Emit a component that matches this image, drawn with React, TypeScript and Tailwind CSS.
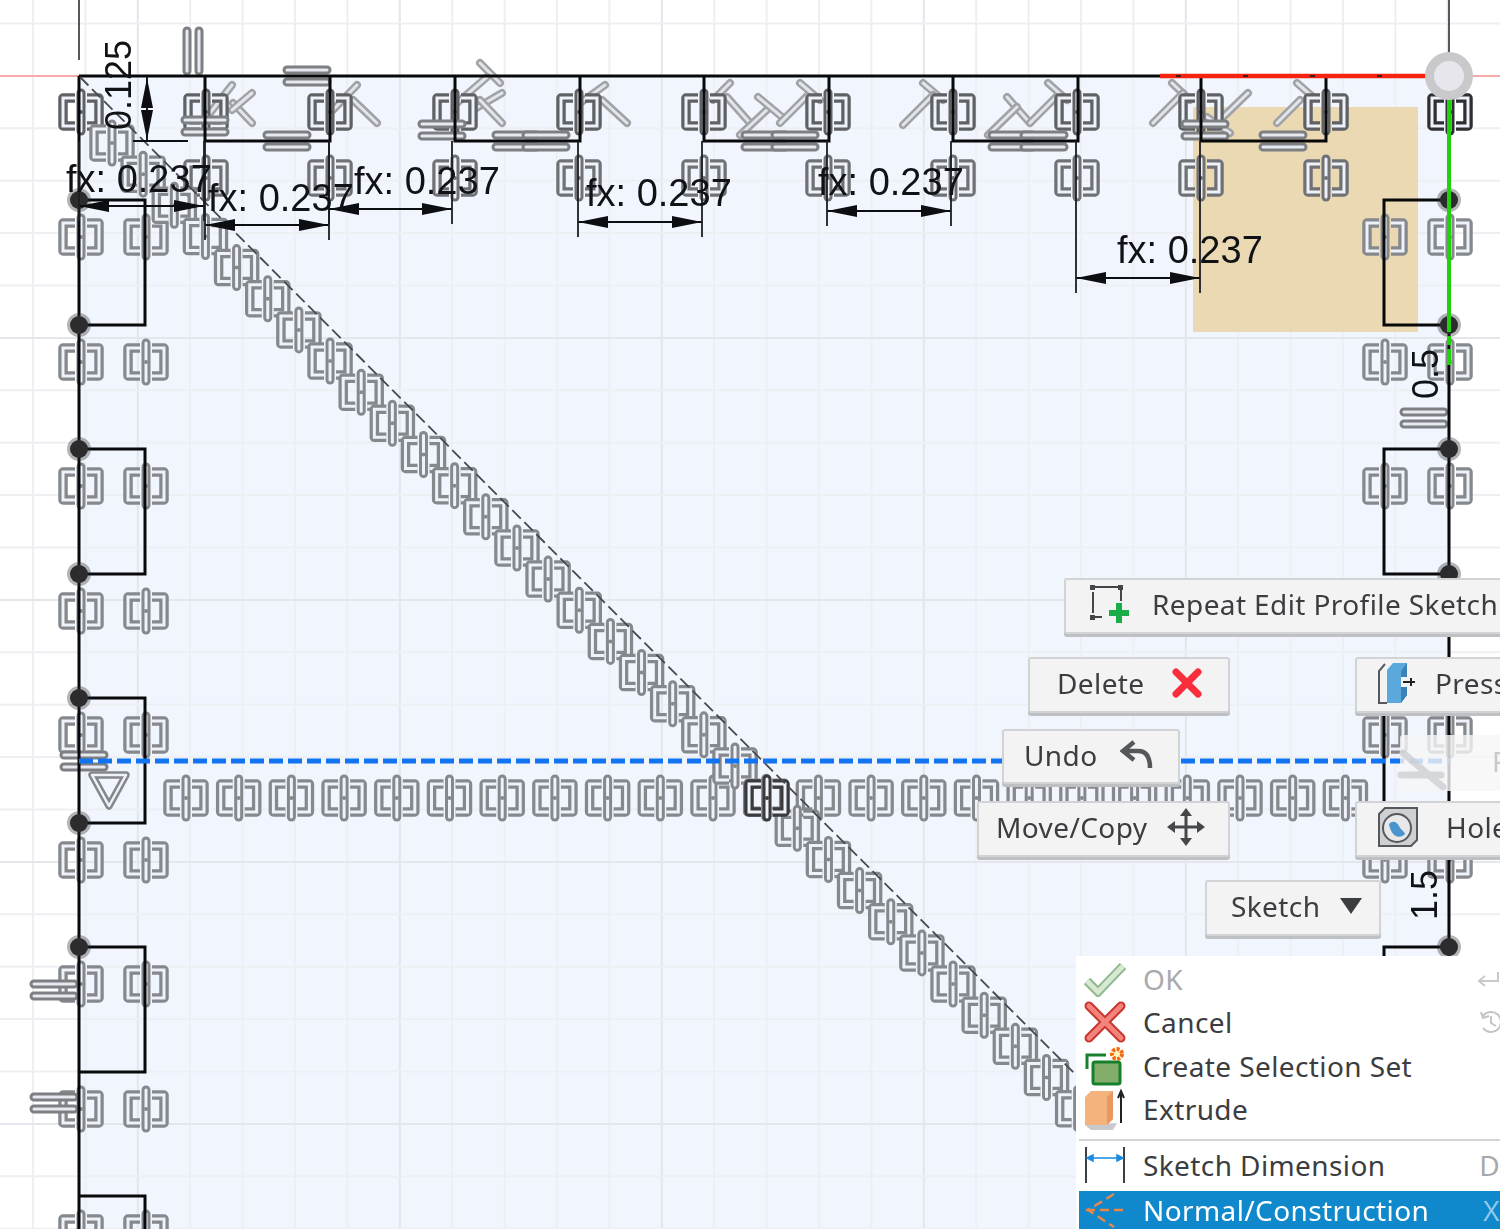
import type { ReactNode } from 'react'

const minorX = Array.from({ length: 28 }, (_, i) => 33 + i * 52.4)
const minorY = Array.from({ length: 24 }, (_, i) => 23.5 + i * 52.4)

const topTabs = [205, 455, 704, 953, 1201]
const sideRows = [200, 449, 698, 947, 1196]
const topGlyphX = [81, 206, 330, 455, 579, 704, 828, 953, 1077, 1201, 1326]
const lowGlyphX = [206, 330, 455, 579, 704, 828, 953, 1077, 1201, 1326]
const sideGlyphY = [237, 362, 486, 611, 735, 860, 984, 1109, 1233]
const rightGlyphY = [237, 362, 486, 735, 860]
const rowGlyphX = Array.from({ length: 23 }, (_, i) => 186 + i * 52.7)
const diagonal = Array.from({ length: 32 }, (_, i) => [112 + i * 31.15, 143 + i * 31.15])

// "equal" bars lying flat
const equalH = [
  [307, 76],
  [287, 141],
  [205, 126],
  [442, 130],
  [516, 141],
  [546, 141],
  [765, 141],
  [795, 141],
  [1012, 141],
  [1044, 141],
  [1283, 141],
  [1205, 130],
  [1424, 418],
  [84, 761],
  [54, 990],
  [54, 1103],
]

// perpendicular ticks, as end points
const slashes = [
  [210, 113, 232, 85],
  [233, 103, 252, 123],
  [232, 110, 252, 93],
  [333, 110, 357, 85],
  [353, 100, 377, 123],
  [480, 63, 500, 83],
  [457, 103, 487, 77],
  [473, 110, 502, 93],
  [480, 100, 502, 123],
  [580, 103, 605, 85],
  [602, 100, 627, 123],
  [713, 100, 730, 83],
  [727, 97, 750, 123],
  [740, 135, 770, 107],
  [758, 97, 782, 117],
  [780, 123, 810, 93],
  [800, 83, 820, 100],
  [923, 83, 943, 100],
  [903, 125, 933, 95],
  [1007, 97, 1030, 123],
  [988, 135, 1017, 107],
  [1030, 123, 1058, 95],
  [1048, 83, 1067, 100],
  [1172, 83, 1190, 100],
  [1153, 123, 1183, 93],
  [1220, 120, 1248, 93],
  [1207, 117, 1230, 133],
  [1297, 83, 1313, 97],
  [1277, 123, 1300, 100],
]

const dims = [
  { x1: 79, x2: 204, y: 206 },
  { x1: 205, x2: 329, y: 225 },
  { x1: 329, x2: 452, y: 209 },
  { x1: 578, x2: 702, y: 222 },
  { x1: 827, x2: 951, y: 211 },
  { x1: 1076, x2: 1200, y: 278 },
]

const dimLabels = [
  [66, 192],
  [208, 211],
  [354, 194],
  [586, 206],
  [818, 195],
  [1117, 263],
]

const pointRows = [200, 325, 449, 574, 698, 823, 947]

function Glyph({ x, y, color = '#85888d' }: { x: number; y: number; color?: string }) {
  const inner = '#eef2f9'
  const left = 'M-6,-14 H-18 V14 H-6'
  const right = 'M6,-14 H18 V14 H6'
  return (
    <g transform={`translate(${x} ${y})`} fill="none">
      <path d={left} stroke={color} strokeWidth="9.5" strokeLinejoin="round" />
      <path d={right} stroke={color} strokeWidth="9.5" strokeLinejoin="round" />
      <path d={left} stroke={inner} strokeWidth="3" />
      <path d={right} stroke={inner} strokeWidth="3" />
      <path d="M0,-19 V19" stroke={color} strokeWidth="9" strokeLinecap="round" />
      <path d="M0,-19 V19" stroke={inner} strokeWidth="3" strokeLinecap="round" />
      <circle r="2" fill={color} />
    </g>
  )
}

function EqualBars({ x, y, vertical }: { x: number; y: number; vertical?: boolean }) {
  return (
    <g transform={`translate(${x} ${y}) rotate(${vertical ? 90 : 0})`} fill="none" strokeLinecap="round">
      <path d="M-20,-6 H20 M-20,6 H20" stroke="#7d7f83" strokeWidth="9" />
      <path d="M-20,-6 H20 M-20,6 H20" stroke="#e6e9ef" strokeWidth="3" />
    </g>
  )
}

function Slash({ line }: { line: number[] }) {
  const d = `M${line[0]},${line[1]} L${line[2]},${line[3]}`
  return (
    <g fill="none" strokeLinecap="round">
      <path d={d} stroke="#a0a2a6" strokeWidth="8" />
      <path d={d} stroke="#e2e5ea" strokeWidth="3" />
    </g>
  )
}

function SketchCanvas() {
  const outline = [
    'M79,76 H1449 V1229 M79,76 V1229',
    ...topTabs.map((x) => `M${x},76 V141 H${x + 125} V76`),
    ...sideRows.map((y) => `M79,${y} H145 V${y + 125} H79`),
    ...sideRows.map((y) => `M1449,${y} H1384 V${y + 125} H1449`),
  ].join(' ')

  return (
    <svg className="absolute inset-0 blur-[0.6px]" width="1500" height="1229" viewBox="0 0 1500 1229">
      <rect x="79" y="76" width="1370" height="1153" fill="#f1f5fd" />
      {minorX.map((x, i) => (
        <path key={i} d={`M${x},0 V1229`} stroke={i % 5 === 2 ? '#e3e6ea' : '#edeff3'} strokeWidth="2" />
      ))}
      {minorY.map((y, i) => (
        <path key={i} d={`M0,${y} H1500`} stroke={i % 5 === 1 ? '#e3e6ea' : '#edeff3'} strokeWidth="2" />
      ))}

      <rect x="1193" y="107" width="225" height="225" fill="#e8cf96" fillOpacity="0.72" />

      {slashes.map((line, i) => (
        <Slash key={i} line={line} />
      ))}
      {topGlyphX.map((x) => (
        <Glyph key={x} x={x} y={112} color="#5f6165" />
      ))}
      <Glyph x={1450} y={112} color="#2f2f32" />
      {lowGlyphX.map((x) => (
        <Glyph key={x} x={x} y={178} color="#6f7175" />
      ))}
      {sideGlyphY.map((y) => (
        <g key={y}>
          <Glyph x={81} y={y} />
          <Glyph x={146} y={y} />
        </g>
      ))}
      {rightGlyphY.map((y) => (
        <g key={y}>
          <Glyph x={1385} y={y} />
          <Glyph x={1450} y={y} />
        </g>
      ))}
      {rowGlyphX.map((x) => (
        <Glyph key={x} x={x} y={798} />
      ))}
      {diagonal.map(([x, y]) => (
        <Glyph key={x} x={x} y={y} />
      ))}
      <Glyph x={767} y={798} color="#3a3a3d" />
      {equalH.map(([x, y]) => (
        <EqualBars key={`${x}-${y}`} x={x} y={y} />
      ))}
      <EqualBars x={193} y={51} vertical />
      <path d="M92,775 H126 L109,806 Z" fill="none" stroke="#85878b" strokeWidth="7.5" strokeLinejoin="round" />
      <path d="M92,775 H126 L109,806 Z" fill="none" stroke="#eef2f9" strokeWidth="2.5" strokeLinejoin="round" />

      {/* axes */}
      <path d="M0,76 H79 M1449,76 H1500" stroke="#f6a9a9" strokeWidth="2" />
      <path d="M79,0 V60 M1449,0 V60" stroke="#55585c" strokeWidth="2" />

      <path d={outline} fill="none" stroke="#08090a" strokeWidth="3" />
      <path d="M80,77 L1076,1075" stroke="#47494d" strokeWidth="1.8" strokeDasharray="12 5" />
      <path d="M79,761 H1449" stroke="#1174f2" strokeWidth="5" strokeDasharray="14 5" />
      <path d="M1160,76 H1432" stroke="#f4240f" strokeWidth="4.5" />
      <path d="M1176,76 H1432" stroke="#40201c" strokeWidth="2" strokeDasharray="5 62" />

      {pointRows.map((y) => (
        <g key={y} fill="#2c2c2e">
          <circle cx="79" cy={y} r="12" fillOpacity="0.35" />
          <circle cx="79" cy={y} r="9" />
          <circle cx="1449" cy={y} r="12" fillOpacity="0.35" />
          <circle cx="1449" cy={y} r="9" />
        </g>
      ))}
      <path d="M1449,95 V365" stroke="#22d10e" strokeWidth="4" strokeDasharray="237 4 9 4 16 400" />
      <circle cx="1449" cy="76" r="24" fill="#c9c9cc" />
      <circle cx="1449" cy="76" r="15" fill="#e6e6ec" />

      {/* dimensions */}
      {dims.map(({ x1, x2, y }) => (
        <g key={x1} fill="#0c0e12">
          <path d={`M${x1},${y} H${x2}`} stroke="#0c0e12" strokeWidth="1.8" />
          <path d={`M${x1},${y} l30,-6 v12 Z M${x2},${y} l-30,-6 v12 Z`} />
          <path d={`M${x1},141 V${y + 15} M${x2},141 V${y + 15}`} stroke="#1c1e22" strokeWidth="1.8" />
        </g>
      ))}
      <path d="M147,76 V141 M133,141 H188" stroke="#0c0e12" strokeWidth="1.8" />
      <path d="M147,78 l-6,30 h12 Z M147,140 l-6,-30 h12 Z" fill="#0c0e12" />

      <g fontFamily="'Liberation Sans', Arial, sans-serif" fontSize="38" fill="#101216">
        {dimLabels.map(([x, y]) => (
          <text key={x} x={x} y={y}>
            fx: 0.237
          </text>
        ))}
        <text transform="translate(131 130) rotate(-90)" fontSize="36">
          0.125
        </text>
        <text transform="translate(1438 399) rotate(-90)" fontSize="36">
          0.5
        </text>
        <text transform="translate(1437 920) rotate(-90)" fontSize="36">
          1.5
        </text>
      </g>
    </svg>
  )
}

function PopButton({ className, children }: { className: string; children: ReactNode }) {
  return (
    <div
      className={`absolute flex items-center rounded-[3px] border-2 border-[#d2d3d5] bg-[#f3f3f3] pb-1 font-['Noto_Sans',sans-serif] text-[28px] tracking-[0.4px] text-[#3c3d40] shadow-[0_3px_0_#bfc0c3] blur-[0.4px] ${className}`}
    >
      {children}
    </div>
  )
}

function MenuRow({
  icon,
  label,
  shortcut,
  className,
}: {
  icon: ReactNode
  label: string
  shortcut?: ReactNode
  className: string
}) {
  return (
    <div className={`flex h-[43.5px] shrink-0 items-center ${className}`}>
      <div className="flex w-[64px] shrink-0 justify-center pr-[12px]">{icon}</div>
      <span className="flex-1 whitespace-nowrap">{label}</span>
      {shortcut}
    </div>
  )
}

function ContextMenu() {
  return (
    <div className="absolute left-[1076px] top-[956px] flex h-[273px] w-[424px] flex-col bg-white pl-[3px] pt-[3px] font-['Noto_Sans',sans-serif] text-[28px] leading-none tracking-[0.4px] blur-[0.4px]">
      <MenuRow
        className="pb-1 text-[#a9aaac]"
        label="OK"
        icon={
          <svg width="44" height="36" viewBox="0 0 44 36">
            <path d="M4,20 L15,31 L40,5" fill="none" stroke="#8fb98f" strokeWidth="9" />
            <path d="M4,20 L15,31 L40,5" fill="none" stroke="#d8e8d2" strokeWidth="5" />
          </svg>
        }
        shortcut={
          <svg className="shrink-0" width="24" height="24" viewBox="0 0 24 24">
            <path d="M22,5 V14 H4 M9,9 L3,14 L9,19" fill="none" stroke="#c9c9c9" strokeWidth="2" />
          </svg>
        }
      />
      <MenuRow
        className="pb-1 text-[#3c3d40]"
        label="Cancel"
        icon={
          <svg width="42" height="42" viewBox="0 0 42 42">
            <path d="M5,5 L37,37 M37,5 L5,37" stroke="#c8372f" strokeWidth="9" strokeLinecap="round" />
            <path d="M5,5 L37,37 M37,5 L5,37" stroke="#f4837b" strokeWidth="5" strokeLinecap="round" />
          </svg>
        }
        shortcut={
          <svg className="shrink-0 -mr-1" width="26" height="26" viewBox="0 0 26 26">
            <path d="M5,7 A10,10 0 1 1 5,19 M3,3 L5,9 L11,7 M13,7 V14 L18,17" fill="none" stroke="#c4c4c4" strokeWidth="2" />
          </svg>
        }
      />
      <MenuRow
        className="pb-1 text-[#3c3d40]"
        label="Create Selection Set"
        icon={
          <svg width="42" height="42" viewBox="0 0 42 42">
            <path d="M3,24 V10 H22" fill="none" stroke="#17802c" strokeWidth="3" />
            <rect x="9" y="17" width="27" height="22" rx="2" fill="#82ad6a" stroke="#17802c" strokeWidth="3" />
            <circle cx="33" cy="9" r="5" fill="#fff3c0" stroke="#f06a10" strokeWidth="4" strokeDasharray="3 1.5" />
          </svg>
        }
      />
      <MenuRow
        className="pb-1 text-[#3c3d40]"
        label="Extrude"
        icon={
          <svg width="44" height="44" viewBox="0 0 44 44">
            <path d="M2,38 L8,43 H30 L34,36 Z" fill="#c8c9cc" />
            <path d="M2,10 L8,4 H30 V32 L24,38 H2 Z" fill="#f4b27c" />
            <path d="M24,10 L30,4 V32 L24,38 Z" fill="#e8995f" />
            <path d="M38,36 V6 M35,11 L38,4 L41,11" fill="none" stroke="#222" strokeWidth="2" />
          </svg>
        }
      />
      <div className="my-[6px] h-[2px] shrink-0 bg-[#d4d4d4]" />
      <MenuRow
        className="pb-2 text-[#3c3d40]"
        label="Sketch Dimension"
        icon={
          <svg width="42" height="38" viewBox="0 0 42 38">
            <path d="M2,1 V37 M40,1 V37" stroke="#3c4046" strokeWidth="2" />
            <path d="M3,12 H39 M3,12 l6,-3 v6 Z M39,12 l-6,-3 v6 Z" fill="#1a8be0" stroke="#1a8be0" strokeWidth="1.5" />
          </svg>
        }
        shortcut={<span className="shrink-0 text-[#a7a8aa]">D</span>}
      />
      <MenuRow
        className="bg-[#1088cc] pb-1 text-white"
        label="Normal/Construction"
        icon={
          <svg width="42" height="38" viewBox="0 0 42 38">
            <path d="M2,19 H40 M30,3 L4,19 L30,36" fill="none" stroke="#e8874a" strokeWidth="2.5" strokeDasharray="9 5" />
          </svg>
        }
        shortcut={<span className="shrink-0 text-[#8cc8ea]">X</span>}
      />
    </div>
  )
}

export default function App() {
  return (
    <div className="relative h-[1229px] w-[1500px] overflow-hidden bg-white">
      <SketchCanvas />

      {/* button still fading in */}
      <div className="absolute left-[1400px] top-[735px] h-[56px] w-[110px] rounded-[3px] bg-[#f6f6f6]/80 pl-[92px] pt-[5px] font-['Noto_Sans',sans-serif] text-[28px] text-[#c9c9c9] blur-[0.4px]">
        F
      </div>
      <svg className="absolute left-[1395px] top-[745px]" width="60" height="50" viewBox="0 0 60 50">
        <path d="M8,8 L48,42 M6,30 H46" fill="none" stroke="#c9cbce" strokeWidth="7" strokeLinecap="round" strokeOpacity="0.7" />
      </svg>

      <PopButton className="left-[1064px] top-[578px] h-[56px] w-[460px] pl-[22px]">
        <svg className="mr-[22px] shrink-0" width="42" height="42" viewBox="0 0 42 42">
          <path d="M5,4 H30 M5,9 V30 M5,34 H14 M33,7 V18" fill="none" stroke="#44464a" strokeWidth="2" />
          <path d="M2,2 h5 v5 h-5 Z M30,2 h5 v5 h-5 Z M2,32 h5 v5 h-5 Z" fill="#44464a" />
          <path d="M31,20 V40 M21,30 H41" stroke="#18ad48" strokeWidth="6" />
        </svg>
        <span className="whitespace-nowrap">Repeat Edit Profile Sketch</span>
      </PopButton>

      <PopButton className="left-[1028px] top-[657px] h-[56px] w-[202px] pl-[27px]">
        <span>Delete</span>
        <svg className="ml-[27px]" width="30" height="30" viewBox="0 0 30 30">
          <path d="M4,4 L26,26 M26,4 L4,26" stroke="#f92d3c" strokeWidth="7" strokeLinecap="round" />
        </svg>
      </PopButton>

      <PopButton className="left-[1355px] top-[657px] h-[56px] w-[180px] pl-[20px]">
        <svg className="mr-[18px] shrink-0" width="40" height="44" viewBox="0 0 40 44">
          <path d="M8,3 L2,10 V42 H10" fill="#f2f2f2" stroke="#55585c" strokeWidth="2" />
          <path d="M10,9 L16,2 H30 V34 L24,42 H10 Z" fill="#5aa8dc" />
          <path d="M24,10 L30,2 V34 L24,42 Z" fill="#3a82b8" />
          <rect x="24" y="16" width="10" height="10" fill="#f3f3f3" />
          <path d="M26,21 H38 M34,17 V25" stroke="#222" strokeWidth="2" />
        </svg>
        <span>Press</span>
      </PopButton>

      <PopButton className="left-[1002px] top-[729px] h-[55px] w-[178px] pl-[20px]">
        <span>Undo</span>
        <svg className="ml-[22px]" width="34" height="34" viewBox="0 0 34 34">
          <path d="M14,4 L3,13 L14,22 M4,13 H18 C26,13 30,19 30,30" fill="none" stroke="#55575b" strokeWidth="4.5" />
        </svg>
      </PopButton>

      <PopButton className="left-[977px] top-[801px] h-[56px] w-[253px] pl-[17px]">
        <span>Move/Copy</span>
        <svg className="ml-[20px]" width="38" height="38" viewBox="0 0 38 38">
          <path d="M19,3 V35 M3,19 H35" stroke="#44464a" strokeWidth="3" />
          <path d="M19,0 L13,8 H25 Z M19,38 L13,30 H25 Z M0,19 L8,13 V25 Z M38,19 L30,13 V25 Z" fill="#44464a" />
        </svg>
      </PopButton>

      <PopButton className="left-[1355px] top-[801px] h-[56px] w-[180px] pl-[20px]">
        <svg className="mr-[27px] shrink-0" width="42" height="42" viewBox="0 0 42 42">
          <path d="M2,8 L8,2 H40 V34 L34,40 H2 Z" fill="#cfd0d2" stroke="#55585c" strokeWidth="2" />
          <circle cx="20" cy="22" r="14" fill="#e8e8ea" stroke="#55585c" strokeWidth="2" />
          <path d="M12,18 C16,14 20,16 22,20 C24,24 28,26 28,28 C22,34 14,30 12,18 Z" fill="#4a95cf" />
        </svg>
        <span>Hole</span>
      </PopButton>

      <PopButton className="left-[1205px] top-[880px] h-[56px] w-[176px] pl-[24px]">
        <span>Sketch</span>
        <svg className="ml-[20px]" width="22" height="16" viewBox="0 0 22 16">
          <path d="M0,0 H22 L11,16 Z" fill="#3c3d40" />
        </svg>
      </PopButton>

      <ContextMenu />
    </div>
  )
}
